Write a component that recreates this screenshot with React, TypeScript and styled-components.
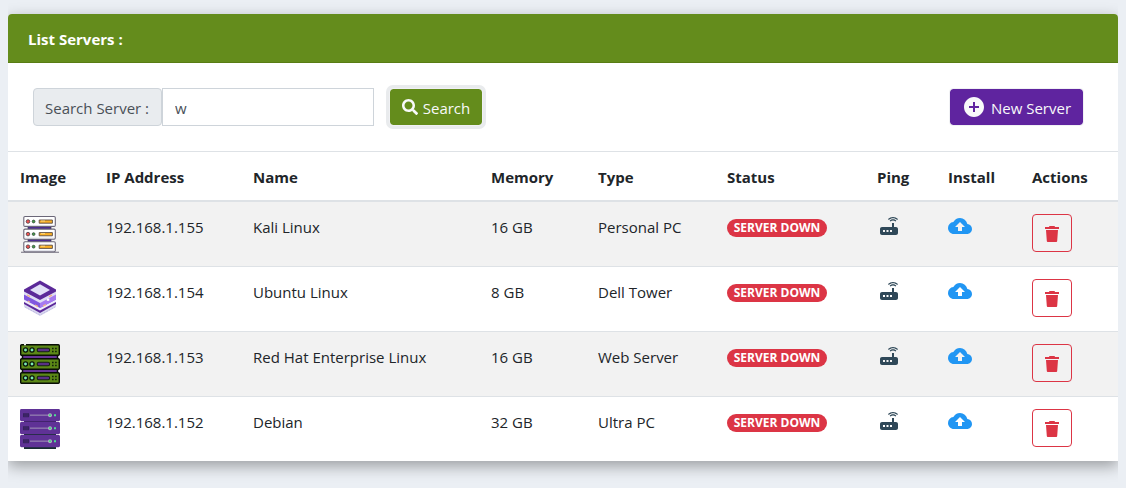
import React, { useState } from "react";
import styled, { createGlobalStyle } from "styled-components";
import { FaSearch } from "react-icons/fa";
import { MdAddCircle, MdBackup, MdRouter } from "react-icons/md";

const GlobalStyle = createGlobalStyle`
  *, *::before, *::after { box-sizing: border-box; }
  body {
    margin: 0;
    background: #ebeff4;
    color: #212529;
    font-family: "Segoe UI", "Open Sans", "Noto Sans", sans-serif;
    font-size: 15px;
    line-height: 24px;
  }
`;

const Page = styled.main`
  margin: 0 8px;
  padding: 14px 0 27px;
  overflow: hidden;
`;

const Card = styled.section`
  background: #fff;
  border-radius: 4px 4px 0 0;
  box-shadow: 0 5px 15px rgba(0, 0, 0, 0.35);
`;

const CardHeader = styled.h1`
  margin: 0;
  padding: 13px 20px 11px;
  border-bottom: 1px solid #587c14;
  border-radius: 4px 4px 0 0;
  background: #648c1c;
  color: #fff;
  font-size: 15px;
  font-weight: 700;
`;

const Toolbar = styled.div`
  display: flex;
  justify-content: space-between;
  padding: 25px 34px 25px 25px;
`;

const SearchForm = styled.form`
  display: flex;
  gap: 15px;
`;

const InputGroup = styled.div`
  display: flex;
`;

const InputLabel = styled.label`
  width: 129px;
  height: 38px;
  padding: 7px 11px 5px;
  border: 1px solid #ced4da;
  border-radius: 4px;
  background: #e9ecef;
  color: #495057;
  white-space: nowrap;
`;

const TextInput = styled.input`
  width: 212px;
  height: 38px;
  padding: 7px 12px 5px;
  border: 1px solid #ced4da;
  border-radius: 0;
  background: #fff;
  color: #495057;
  font: inherit;
  outline: none;
`;

const SolidButton = styled.button<{ $color: string; $width: number; $ring?: boolean }>`
  display: flex;
  align-items: center;
  justify-content: center;
  gap: 5px;
  width: ${(p) => p.$width}px;
  height: 38px;
  padding: 0;
  border: 1px solid #f0f1f4;
  border-radius: 4px;
  background: ${(p) => p.$color};
  background-clip: padding-box;
  box-shadow: ${(p) => (p.$ring ? "0 0 0 3px #e9ebed" : "none")};
  color: #f8f9fa;
  font: inherit;
  white-space: nowrap;
  cursor: pointer;
`;

const ButtonText = styled.span`
  padding-top: 2px;
`;

const Table = styled.table`
  width: 100%;
  table-layout: fixed;
  border-collapse: collapse;
`;

const HeadCell = styled.th<{ $width: number }>`
  width: ${(p) => p.$width}px;
  height: 49px;
  padding: 13px 0 10px 12px;
  border-top: 1px solid #dee2e6;
  border-bottom: 2px solid #dee2e6;
  font-size: 15px;
  font-weight: 700;
  text-align: left;
  white-space: nowrap;
`;

const Row = styled.tr`
  &:nth-child(odd) { background: #f2f2f2; }
  & + & { border-top: 1px solid #dee2e6; }
`;

const Cell = styled.td`
  height: 65px;
  padding: 13px 0 11px 12px;
  vertical-align: top;
  white-space: nowrap;
`;

const IconCell = styled(Cell)`
  padding: 12px 0 12px 12px;

  & > svg { display: block; }
`;

const StatusCell = styled(Cell)`
  padding-top: 17px;
`;

const StatusBadge = styled.span`
  display: block;
  width: 100px;
  height: 18px;
  border-radius: 9px;
  background: #dc3545;
  color: #fff;
  font-size: 12px;
  font-weight: 700;
  line-height: 18px;
  text-align: center;
`;

const PlainButton = styled.button<{ $color: string }>`
  display: block;
  width: 24px;
  height: 24px;
  padding: 0;
  border: 0;
  background: none;
  color: ${(p) => p.$color};
  cursor: pointer;

  & > svg { display: block; }
`;

const DeleteButton = styled.button`
  display: flex;
  align-items: center;
  justify-content: center;
  width: 40px;
  height: 38px;
  padding: 2px 0 0;
  border: 1px solid #dc3545;
  border-radius: 4px;
  background: transparent;
  color: #dc3545;
  cursor: pointer;
`;

const units = [0, 1, 2];

const TrashIcon = () => (
  <svg width="16" height="16" viewBox="0 0 16 16" fill="currentColor" aria-hidden="true">
    <path d="M5.5 0h5l.6 1H15v2H1V1h3.9zM2 4h12l-.8 11a1 1 0 0 1-1 1H3.800a1 1 0 0 1-1-1z" />
  </svg>
);

const RackWhite = () => (
  <svg width="40" height="40" viewBox="0 0 40 40" aria-hidden="true">
    {units.map((n) => (
      <g key={n} transform={`translate(0 ${n * 12.6})`}>
        {n < 2 && <path d="M8 12.5h23v2.8H8z" fill="#4c2c91" stroke="#34314e" strokeWidth=".7" />}
        <rect x="3.8" y="2.5" width="31.5" height="10" rx="1.2" fill="#fff" stroke="#6b6778" strokeWidth="1.1" />
        <path d="M5 11.5h29" stroke="#dcdde6" />
        <circle cx="8" cy="7.5" r="1.8" fill="#ef5350" stroke="#463e45" strokeWidth=".8" />
        <circle cx="13.6" cy="7.5" r="1.4" fill="#43a047" stroke="#354638" strokeWidth=".8" />
        <path d="M19.2 6h13.2v3.2H19.2z" fill="#fbb126" stroke="#574a43" strokeWidth=".9" />
        <path d="M21 7h4" stroke="#ffe39b" strokeWidth=".8" />
      </g>
    ))}
    <path d="M1 38.2h38" stroke="#716d7c" strokeWidth="1.1" />
  </svg>
);

const StackedLayers = () => (
  <svg width="40" height="40" viewBox="0 0 40 40" aria-hidden="true">
    <path d="M4 24v4l16 9 16-9v-4L20 33z" fill="#d9d8f0" />
    <path d="M4 22.500 20 14l16 8.500V25l-16 9-16-9z" fill="#5b2999" />
    <path d="M4 20.500 20 12l16 8.500V23l-16 8.500L4 23z" fill="#eeecfb" />
    <path d="M4 15.500 20 8l16 7.500v5L20 29 4 20.500z" fill="#8057df" />
    <path d="m20 23 16-8v5.500L20 29z" fill="#a77bf0" />
    <path d="M4 12.500 20 4l16 8.500v3L20 24 4 15.500z" fill="#dedcf4" />
    <path d="m20 1.500 16 9v2L20 21 4 12.500v-2z" fill="#5b2999" />
    <path d="m20 5.300 10 5.600-10 5.500-10-5.500z" fill="#e1e0f7" />
    <path d="m7 16 3 1.600M8 22l2 1.200m5 2.800 3 1.600m5-.5 3-1.500m3-8 3-1.500" stroke="#f3b38a" strokeWidth="1.2" />
    <path d="M26.800 19.500h2.500v2.300h-2.500z" fill="#fff" />
    <path d="m5 28 15 8 15-8" fill="none" stroke="#b9b4dc" strokeWidth=".8" strokeDasharray="2 1" />
  </svg>
);

const RackGreen = () => (
  <svg width="40" height="40" viewBox="0 0 40 40" aria-hidden="true">
    <path d="M2.500 11h35v18h-35z" fill="#643493" stroke="#090d09" strokeWidth="1.5" />
    {units.map((n) => (
      <g key={n} transform={`translate(0 ${n * 14})`}>
        <rect x=".7" y=".7" width="38.6" height="10.6" rx="1" fill="#5c8917" stroke="#080d06" strokeWidth="1.4" />
        <circle cx="5.5" cy="6" r="2.1" fill="#7bebb4" stroke="#07120b" strokeWidth="1.3" />
        <circle cx="12" cy="6" r="2.1" fill="#7bebb4" stroke="#07120b" strokeWidth="1.3" />
        <rect x="17.2" y="4.3" width="12.4" height="3.4" rx="1.5" fill="#593086" stroke="#152013" strokeWidth="1.1" />
        <path d="M32 4.500h5M32 7.500h5" stroke="#12200a" strokeWidth="1.3" strokeDasharray="1.6 1.5" />
      </g>
    ))}
    <path d="M4 .7h2" stroke="#edf0eb" strokeWidth="1.3" />
  </svg>
);

const RackPurple = () => (
  <svg width="40" height="40" viewBox="0 0 40 40" aria-hidden="true">
    {units.map((n) => (
      <g key={n} transform={`translate(0 ${n * 13})`}>
        <path d="M4 11.500h32V14H4z" fill={n === 0 ? "#39215f" : "#172c32"} />
        <rect y="0" width="40" height="12.2" rx="1.4" fill="#5f3296" />
        <path d="M3 4.200h6v4H3z" fill="#35215e" />
        <path d="M5 4.200v4m2-4v4" stroke="#4b2b76" strokeWidth=".6" />
        <path d="M10 6.200h19" stroke="#8c75ad" strokeWidth="1.5" />
        <circle cx="30" cy="6.2" r="2" fill="#aeb2c0" />
        <circle cx="30" cy="6.2" r="1.1" fill="#49d486" />
        <path d="M34 5.200h2v2h-2z" fill="#4be092" />
      </g>
    ))}
  </svg>
);

const columns = [
  { label: "Image", width: 86 },
  { label: "IP Address", width: 147 },
  { label: "Name", width: 238 },
  { label: "Memory", width: 107 },
  { label: "Type", width: 129 },
  { label: "Status", width: 150 },
  { label: "Ping", width: 71 },
  { label: "Install", width: 84 },
  { label: "Actions", width: 98 },
];

const servers = [
  { Image: RackWhite, ip: "192.168.1.155", name: "Kali Linux", memory: "16 GB", type: "Personal PC" },
  { Image: StackedLayers, ip: "192.168.1.154", name: "Ubuntu Linux", memory: "8 GB", type: "Dell Tower" },
  { Image: RackGreen, ip: "192.168.1.153", name: "Red Hat Enterprise Linux", memory: "16 GB", type: "Web Server" },
  { Image: RackPurple, ip: "192.168.1.152", name: "Debian", memory: "32 GB", type: "Ultra PC" },
];

export default function App() {
  const [query, setQuery] = useState("w");

  return (
    <>
      <GlobalStyle />
      <Page>
        <Card>
          <CardHeader>List Servers :</CardHeader>
          <Toolbar>
            <SearchForm onSubmit={(e) => e.preventDefault()}>
              <InputGroup>
                <InputLabel htmlFor="server-search">Search Server :</InputLabel>
                <TextInput
                  id="server-search"
                  type="text"
                  value={query}
                  onChange={(e) => setQuery(e.target.value)}
                />
              </InputGroup>
              <SolidButton type="submit" $color="#648c1c" $width={94} $ring>
                <FaSearch size={16} />
                <ButtonText>Search</ButtonText>
              </SolidButton>
            </SearchForm>
            <SolidButton type="button" $color="#5f249f" $width={135}>
              <MdAddCircle size={24} />
              <ButtonText>New Server</ButtonText>
            </SolidButton>
          </Toolbar>
          <Table>
            <thead>
              <tr>
                {columns.map((c) => (
                  <HeadCell key={c.label} scope="col" $width={c.width}>
                    {c.label}
                  </HeadCell>
                ))}
              </tr>
            </thead>
            <tbody>
              {servers.map(({ Image, ip, name, memory, type }) => (
                <Row key={ip}>
                  <IconCell><Image /></IconCell>
                  <Cell>{ip}</Cell>
                  <Cell>{name}</Cell>
                  <Cell>{memory}</Cell>
                  <Cell>{type}</Cell>
                  <StatusCell><StatusBadge>SERVER DOWN</StatusBadge></StatusCell>
                  <IconCell>
                    <PlainButton type="button" $color="#2f4858" aria-label={`Ping ${name}`}>
                      <MdRouter size={24} />
                    </PlainButton>
                  </IconCell>
                  <IconCell>
                    <PlainButton type="button" $color="#2196f3" aria-label={`Install ${name}`}>
                      <MdBackup size={24} />
                    </PlainButton>
                  </IconCell>
                  <IconCell>
                    <DeleteButton type="button" aria-label={`Delete ${name}`}>
                      <TrashIcon />
                    </DeleteButton>
                  </IconCell>
                </Row>
              ))}
            </tbody>
          </Table>
        </Card>
      </Page>
    </>
  );
}
